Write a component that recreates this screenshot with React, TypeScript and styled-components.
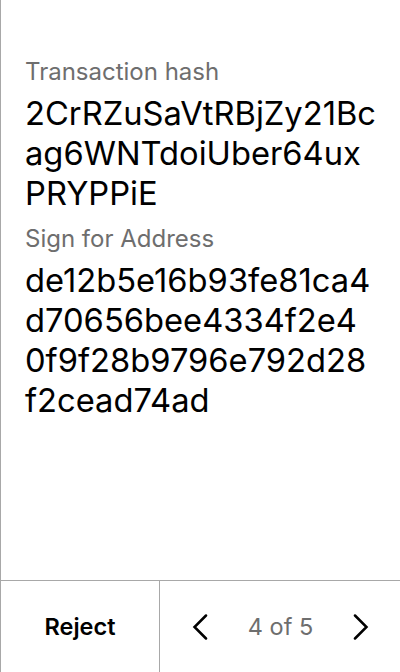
import React from "react";
import styled, { createGlobalStyle } from "styled-components";

const Global = createGlobalStyle`
  html, body { margin: 0; padding: 0; background: #fff; }
  body { font-family: Inter, "Noto Sans", sans-serif; }
  * { box-sizing: border-box; }
`;

const Screen = styled.div`
  width: 400px;
  height: 672px;
  display: flex;
  flex-direction: column;
  border-left: 1px solid #a8a8a8;
  background: #fff;
`;

const Content = styled.div`
  flex: 1;
  padding: 57px 20px 0 24px;
  display: flex;
  flex-direction: column;
`;

const Field = styled.section`
  display: flex;
  flex-direction: column;
  gap: 6px;
  margin-bottom: 11px;
`;

const Label = styled.div`
  font-size: 24px;
  line-height: 30px;
  color: #6e6e6e;
`;

const Value = styled.div`
  font-size: 32.7px;
  line-height: 40px;
  color: #000;
`;

const ValueLine = styled.span`
  display: block;
  white-space: nowrap;
`;

const Footer = styled.div`
  height: 92px;
  display: flex;
  border-top: 1px solid #a8a8a8;
`;

const RejectButton = styled.button`
  width: 159px;
  border: none;
  border-right: 1px solid #a8a8a8;
  background: none;
  font-family: inherit;
  font-size: 23.5px;
  font-weight: 600;
  color: #000;
  padding: 0;
`;

const Pager = styled.div`
  flex: 1;
  display: flex;
  align-items: center;
  justify-content: space-between;
  padding: 0 21px 0 22px;
`;

const Arrow = styled.button`
  width: 36px;
  height: 36px;
  border: none;
  background: none;
  padding: 0;
  display: flex;
  align-items: center;
  justify-content: center;
`;

const Count = styled.span`
  font-size: 23.5px;
  color: #6e6e6e;
`;

const Chevron = ({ dir }: { dir: "left" | "right" }) => (
  <svg width="16" height="26" viewBox="0 0 16 26" fill="none">
    <path
      d={dir === "left" ? "M14 1.5 L2.5 13 L14 24.5" : "M2 1.5 L13.5 13 L2 24.5"}
      stroke="#000"
      strokeWidth="2.5"
      strokeLinecap="round"
      strokeLinejoin="miter"
    />
  </svg>
);

const fields = [
  { label: "Transaction hash", lines: ["2CrRZuSaVtRBjZy21Bc", "ag6WNTdoiUber64ux", "PRYPPiE"] },
  {
    label: "Sign for Address",
    lines: ["de12b5e16b93fe81ca4", "d70656bee4334f2e4", "0f9f28b9796e792d28", "f2cead74ad"],
  },
];

export default function App() {
  return (
    <>
      <Global />
      <Screen>
        <Content>
          {fields.map((f) => (
            <Field key={f.label}>
              <Label>{f.label}</Label>
              <Value>
                {f.lines.map((l) => (
                  <ValueLine key={l}>{l}</ValueLine>
                ))}
              </Value>
            </Field>
          ))}
        </Content>
        <Footer>
          <RejectButton>Reject</RejectButton>
          <Pager>
            <Arrow aria-label="Previous">
              <Chevron dir="left" />
            </Arrow>
            <Count>4 of 5</Count>
            <Arrow aria-label="Next">
              <Chevron dir="right" />
            </Arrow>
          </Pager>
        </Footer>
      </Screen>
    </>
  );
}
